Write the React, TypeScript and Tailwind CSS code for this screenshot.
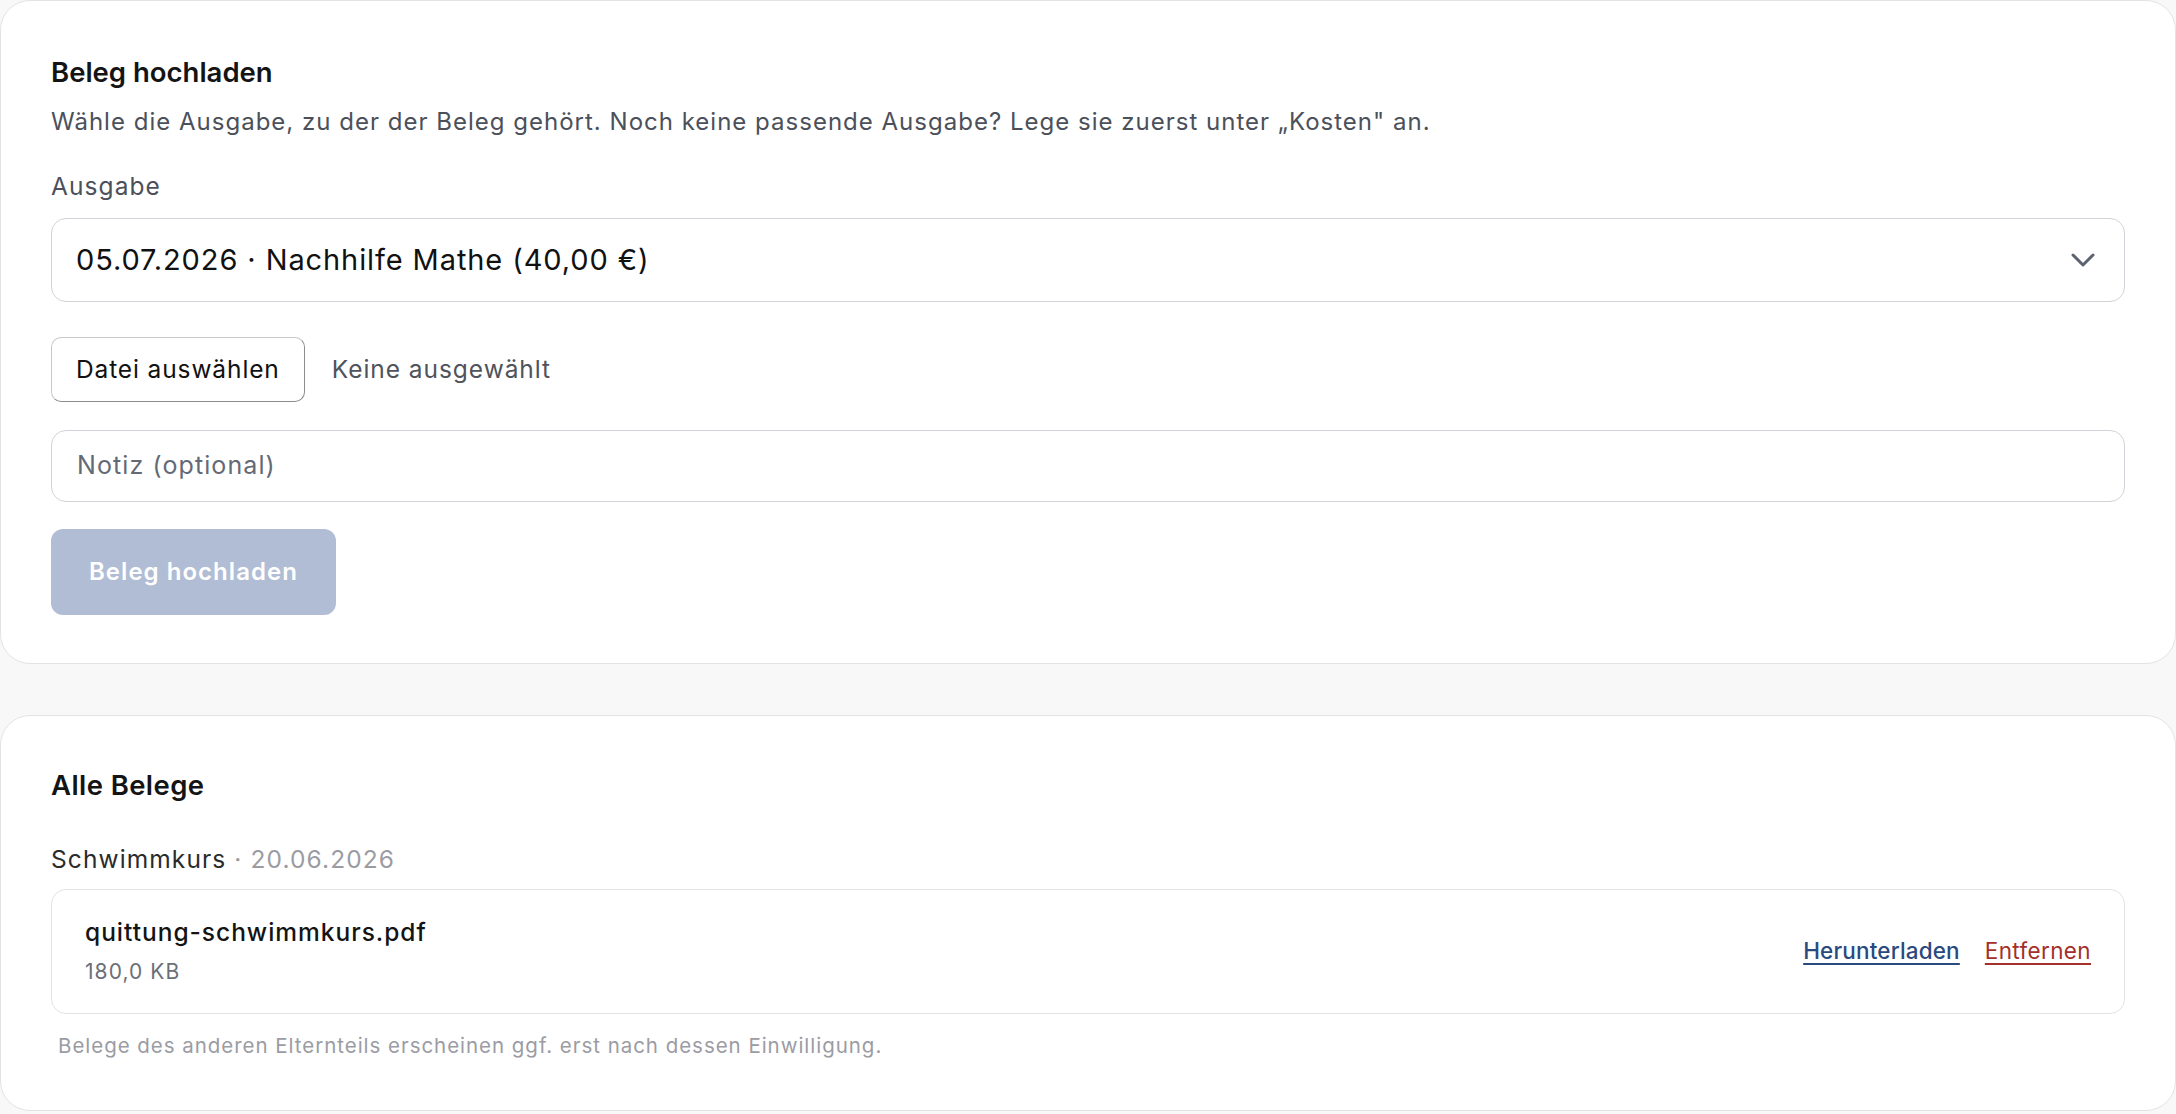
import React from 'react'
import { ChevronDown } from 'lucide-react'

const font = { fontFamily: 'Inter, "Noto Sans", sans-serif' }

export default function App() {
  return (
    <div style={font} className="min-h-screen bg-[#f8f8f8] text-[#111]">
      <UploadCard />
      <div className="h-[51px]" />
      <ReceiptList />
    </div>
  )
}

const UploadCard: React.FC = () => (
  <section className="rounded-[30px] border border-[#e3e3e5] bg-white px-[50px] pt-[53px] pb-[48px]">
    <h2 className="text-[27.5px] leading-[36px] font-semibold text-[#141414]">Beleg hochladen</h2>
    <p className="mt-[14px] text-[24px] leading-[36px] tracking-[0.042em] text-[#4b505a]">
      Wähle die Ausgabe, zu der der Beleg gehört. Noch keine passende Ausgabe? Lege sie zuerst unter „Kosten" an.
    </p>

    <label className="mt-[28px] block text-[24.5px] leading-[36px] tracking-[0.044em] text-[#4b505a]">Ausgabe</label>
    <div className="mt-[14px] flex h-[84px] items-center justify-between rounded-[15px] border border-[#d2d3d8] bg-white pl-[24px] pr-[21px]">
      <span className="text-[29px] tracking-[0.031em] text-[#111]">05.07.2026 · Nachhilfe Mathe (40,00 €)</span>
      <ChevronDown size={40} strokeWidth={1.8} className="text-[#5b6270]" />
    </div>

    {/* file picker */}
    <div className="mt-[35px] flex items-center gap-[27px]">
      <button className="h-[65px] rounded-[10px] border border-[#c9c9c9] border-b-[#8d8d8d] border-r-[#8d8d8d] bg-white px-[24px] text-[24.5px] tracking-[0.036em] text-[#111]">
        Datei auswählen
      </button>
      <span className="text-[24.5px] tracking-[0.039em] text-[#4f535b]">Keine ausgewählt</span>
    </div>

    <div className="mt-[28px] flex h-[72px] items-center rounded-[15px] border border-[#d2d3d8] pl-[25px]">
      <span className="text-[25px] tracking-[0.044em] text-[#646a75]">Notiz (optional)</span>
    </div>

    <button className="mt-[27px] h-[86px] rounded-[12px] bg-[#b0bdd4] px-[38px] text-[24px] tracking-[0.043em] font-semibold text-white">
      Beleg hochladen
    </button>
  </section>
)

const ReceiptList: React.FC = () => (
  <section className="rounded-[30px] border border-[#e3e3e5] bg-white px-[50px] pt-[51px] pb-[49px]">
    <h2 className="text-[27.5px] leading-[36px] tracking-[0.015em] font-semibold text-[#141414]">Alle Belege</h2>

    <div className="mt-[39px] text-[24.5px] leading-[34px] tracking-[0.045em] text-[#2b2b2b]">
      Schwimmkurs <span className="text-[#9b9ca3]">· 20.06.2026</span>
    </div>

    <div className="mt-[13px] flex items-center justify-between rounded-[15px] border border-[#e2e2e4] px-[33px] pt-[26px] pb-[27px]">
      <div>
        <div className="text-[24.5px] leading-[32px] tracking-[0.04em] font-medium text-[#141414]">quittung-schwimmkurs.pdf</div>
        <div className="mt-[10px] text-[21px] leading-[28px] tracking-[0.05em] text-[#6b6f78]">180,0 KB</div>
      </div>
      <div className="flex items-center gap-[25px] text-[22.5px]">
        <a className="font-medium tracking-[0.007em] text-[#2a4a7f] underline underline-offset-[4px]">Herunterladen</a>
        <a className="tracking-[0.016em] text-[#a3302b] underline underline-offset-[4px]">Entfernen</a>
      </div>
    </div>

    <p className="mt-[17px] pl-[7px] text-[20.5px] leading-[30px] tracking-[0.047em] text-[#9b9ca3]">
      Belege des anderen Elternteils erscheinen ggf. erst nach dessen Einwilligung.
    </p>
  </section>
)
